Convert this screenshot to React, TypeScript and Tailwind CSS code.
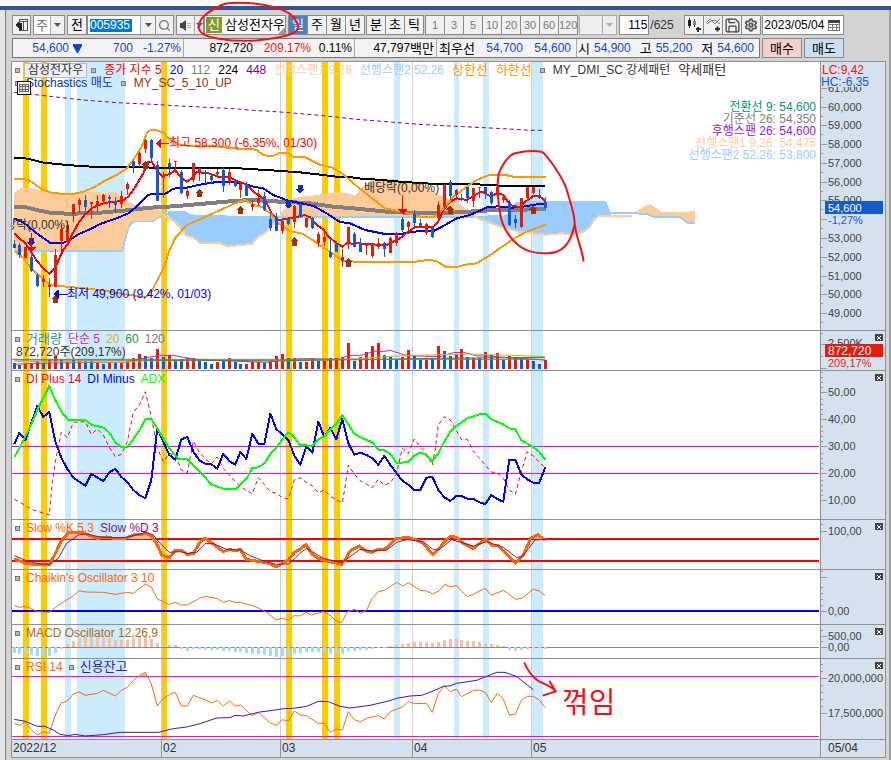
import { useState } from "react";
import type { ReactNode } from "react";
import { Search, Save, Settings } from "lucide-react";
import clsx from "clsx";

// Series are stored in thirds of a pixel; every plot scales them back down.
type Candle = [x: number, top: number, bottom: number, high: number, low: number, up: 0 | 1];
type Bar = [x: number, y: number, up: 0 | 1];
type Tick = { y: number; label?: string };

const UP = "#e81a0c";
const DOWN = "#125acd";
const ORANGE = "#ff6600";
const MAGENTA = "#ff00ff";

const YELLOW_BANDS = [[23, 6], [41, 6], [162, 5], [286, 6], [322, 6], [334, 6]];
const BLUE_BANDS = [[65, 6], [77, 48], [394, 6], [454, 5], [483, 6], [532, 11]];
const MONTH_LINES = [161, 280, 412, 531];

const candles: Candle[] = [
  [43, 463, 474, 449, 475, 0], [58, 465, 495, 458, 503, 0], [76, 471, 504, 471, 504, 1], [94, 501, 543, 490, 545, 0],
  [112, 555, 588, 550, 592, 0], [130, 568, 575, 555, 590, 1], [148, 586, 592, 565, 620, 1], [166, 495, 590, 477, 592, 1],
  [184, 418, 452, 405, 487, 1], [202, 405, 452, 392, 465, 1], [220, 343, 372, 342, 395, 1], [238, 330, 345, 325, 370, 1],
  [256, 330, 350, 315, 362, 0], [274, 336, 341, 336, 388, 1], [292, 333, 347, 315, 365, 1], [310, 316, 332, 313, 338, 1],
  [328, 320, 327, 315, 355, 0], [346, 332, 345, 322, 370, 0], [364, 318, 343, 303, 355, 1], [382, 282, 298, 277, 315, 1],
  [400, 214, 232, 212, 248, 0], [418, 188, 222, 186, 230, 1], [436, 151, 176, 148, 188, 1], [454, 150, 205, 147, 215, 0],
  [472, 226, 332, 212, 333, 0], [490, 258, 263, 245, 325, 1], [508, 220, 232, 208, 262, 0], [526, 213, 217, 213, 250, 1],
  [544, 247, 310, 240, 312, 0], [562, 303, 318, 290, 326, 1], [580, 220, 270, 218, 275, 1], [598, 234, 247, 234, 272, 1],
  [616, 247, 252, 240, 282, 0], [634, 258, 270, 252, 282, 0], [652, 245, 252, 237, 262, 1], [670, 240, 288, 232, 305, 0],
  [688, 245, 275, 238, 285, 1], [706, 272, 288, 272, 292, 0], [721, 283, 300, 280, 323, 1], [739, 282, 317, 277, 319, 0],
  [757, 343, 350, 330, 362, 1], [775, 325, 340, 300, 348, 1], [793, 317, 360, 305, 362, 0], [811, 387, 415, 360, 423, 0],
  [829, 380, 422, 370, 423, 0], [847, 393, 422, 388, 433, 1], [865, 387, 403, 380, 405, 0], [883, 348, 395, 345, 415, 1],
  [901, 341, 382, 335, 384, 0], [919, 385, 410, 383, 415, 1], [937, 383, 415, 381, 417, 0], [955, 433, 458, 425, 472, 1],
  [973, 440, 457, 425, 468, 1], [991, 485, 502, 450, 504, 0], [1009, 458, 485, 452, 486, 0], [1027, 502, 512, 478, 530, 1],
  [1045, 412, 462, 410, 478, 1], [1063, 433, 470, 427, 472, 0], [1081, 460, 485, 445, 487, 0], [1099, 463, 468, 463, 495, 1],
  [1117, 460, 497, 460, 503, 1], [1135, 458, 470, 445, 478, 1], [1153, 460, 478, 455, 502, 0], [1171, 445, 488, 440, 490, 1],
  [1189, 428, 458, 426, 467, 1], [1207, 388, 420, 380, 425, 0], [1225, 395, 412, 393, 425, 1], [1243, 372, 400, 360, 412, 0],
  [1261, 400, 408, 387, 413, 0], [1279, 402, 428, 400, 434, 1], [1297, 415, 440, 413, 445, 0], [1315, 345, 383, 332, 395, 1],
  [1333, 285, 350, 283, 360, 1], [1351, 277, 317, 270, 330, 0], [1369, 300, 314, 298, 320, 1], [1384, 325, 330, 312, 334, 0],
  [1402, 292, 325, 290, 340, 0], [1420, 295, 333, 293, 350, 1], [1438, 292, 295, 292, 325, 1], [1456, 292, 310, 290, 326, 0],
  [1474, 305, 340, 303, 345, 0], [1492, 292, 315, 290, 322, 1], [1510, 320, 330, 318, 340, 1], [1528, 337, 405, 330, 408, 0],
  [1546, 388, 400, 376, 415, 0], [1564, 325, 412, 323, 415, 1], [1582, 292, 325, 290, 330, 1], [1600, 292, 310, 290, 312, 1],
  [1618, 315, 320, 297, 328, 0], [1636, 335, 355, 322, 357, 0],
];

const volumes: Bar[] = [
  [43, 113, 0], [58, 120, 0], [76, 117, 1], [94, 115, 1], [112, 108, 1], [130, 113, 0], [148, 105, 1], [166, 93, 1],
  [184, 105, 0], [202, 112, 1], [220, 105, 0], [238, 107, 1], [256, 107, 0], [274, 107, 0], [292, 112, 1], [310, 117, 0],
  [328, 112, 1], [346, 113, 0], [364, 112, 1], [382, 108, 1], [400, 98, 1], [418, 87, 1], [436, 93, 0], [454, 98, 0],
  [472, 72, 1], [490, 95, 0], [508, 91, 1], [526, 104, 0], [544, 103, 0], [562, 100, 1], [580, 99, 1], [598, 108, 0],
  [616, 112, 0], [634, 117, 0], [652, 112, 1], [670, 107, 0], [688, 99, 1], [706, 111, 0], [721, 118, 0], [739, 117, 1],
  [757, 112, 1], [775, 112, 1], [793, 113, 0], [811, 110, 1], [829, 93, 1], [847, 87, 1], [865, 100, 0], [883, 98, 1],
  [901, 110, 0], [919, 110, 1], [937, 98, 1], [955, 107, 0], [973, 107, 1], [991, 98, 1], [1009, 100, 1], [1027, 96, 1],
  [1045, 54, 1], [1063, 107, 0], [1081, 96, 1], [1099, 81, 1], [1117, 63, 1], [1135, 54, 1], [1153, 90, 0], [1171, 95, 0],
  [1189, 103, 0], [1207, 96, 1], [1225, 75, 1], [1243, 93, 0], [1261, 105, 0], [1279, 105, 1], [1297, 100, 0], [1315, 63, 1],
  [1333, 78, 0], [1351, 93, 0], [1369, 88, 1], [1384, 72, 1], [1402, 95, 0], [1420, 99, 1], [1438, 99, 0], [1456, 81, 1],
  [1474, 90, 0], [1492, 84, 1], [1510, 105, 0], [1528, 93, 1], [1546, 98, 1], [1564, 103, 0], [1582, 103, 1], [1600, 108, 0],
  [1618, 117, 0], [1636, 105, 1],
];

const macd = [
  413, 417, 413, 419, 422, 422, 422, 413, 402, 387, 378, 370, 367, 367, 366, 368, 370, 375, 375, 375, 372, 367, 366, 371,
  384, 390, 390, 390, 402, 407, 402, 402, 405, 405, 405, 408, 408, 411, 411, 414, 416, 417, 420, 423, 426, 423, 423, 417,
  413, 411, 411, 411, 411, 417, 417, 417, 408, 407, 405, 405, 402, 396, 396, 393, 390, 387, 384, 381, 381, 381, 384, 381,
  375, 372, 372, 375, 378, 378, 381, 384, 387, 390, 393, 405, 408, 404, 402, 396, 396, 402,
];

const line = {
  ma448: "43,7 90,12 160,20 250,30 350,38 460,43 540,48 640,53 700,56 760,61 840,66 900,71 970,77 1070,88 1170,96 1270,104 1390,110 1510,116 1590,121 1627,121",
  ma224: "43,204 70,204 90,208 130,218 200,225 290,231 370,231 520,234 700,234 800,240 900,247 960,254 1010,260 1055,262 1090,267 1120,268 1200,275 1270,280 1350,283 1430,283 1520,288 1636,289",
  ma112: "43,350 75,351 110,360 160,370 220,371 300,368 380,361 450,353 520,349 600,342 700,333 760,330 840,335 900,338 930,340 1000,350 1070,356 1170,366 1270,370 1320,370 1390,366 1470,361 1550,360 1638,356",
  ma20: "43,386 70,397 110,430 150,458 185,460 210,450 235,433 270,418 300,402 350,385 385,370 415,345 445,315 455,312 495,312 520,296 560,293 600,284 650,276 700,276 730,280 760,290 790,295 820,315 865,332 895,338 915,342 945,350 980,370 1020,396 1050,400 1095,420 1150,431 1200,432 1250,424 1300,423 1330,408 1370,385 1410,375 1440,362 1460,352 1495,349 1535,353 1570,350 1610,343 1638,340",
  ma5: "43,430 60,447 75,458 90,480 110,512 130,535 148,551 165,535 180,500 190,480 205,460 215,435 235,400 255,373 280,352 310,340 340,335 365,334 385,320 400,300 415,275 430,250 445,215 455,215 467,235 485,258 510,252 526,240 545,265 560,275 575,265 590,246 625,250 660,262 690,262 715,275 740,283 760,305 780,318 795,330 815,370 835,390 865,386 885,382 915,375 930,382 950,405 970,418 985,440 1010,460 1028,470 1045,455 1055,462 1070,458 1085,462 1160,465 1180,455 1200,445 1225,425 1245,412 1300,412 1315,395 1330,360 1350,335 1370,325 1400,330 1420,318 1445,305 1470,318 1495,310 1510,315 1530,345 1560,352 1570,340 1600,318 1620,320 1638,335",
  upper: "43,267 75,268 95,275 125,298 160,310 220,312 250,305 280,293 310,275 350,255 380,235 400,210 425,170 440,130 452,120 470,121 490,128 510,150 540,165 600,170 640,168 690,174 770,179 790,196 820,198 835,190 865,190 880,200 915,202 935,212 960,224 995,232 1030,253 1070,288 1110,320 1155,355 1210,366 1270,382 1300,382 1325,362 1360,320 1400,290 1430,270 1470,254 1510,254 1550,262 1590,261 1638,261",
  lower: "43,483 70,503 90,530 110,550 150,585 220,592 300,600 360,610 435,622 455,605 475,565 495,525 505,490 525,445 560,405 600,388 640,370 700,342 735,330 760,345 790,352 815,375 835,400 870,423 910,432 945,455 970,472 1000,492 1030,512 1090,517 1240,516 1290,509 1310,514 1340,532 1370,532 1390,525 1430,520 1460,502 1500,475 1540,447 1580,425 1638,404",
  diMinus: "43,357 58,324 76,345 112,243 130,276 148,261 166,350 184,398 202,432 220,458 256,482 274,447 310,468 328,442 346,431 364,456 382,471 400,495 418,511 436,519 454,465 472,310 490,350 508,390 526,404 544,343 562,336 580,380 598,406 616,416 634,418 652,431 670,386 688,408 706,419 721,381 739,402 757,326 775,356 793,356 811,266 829,312 865,345 883,392 901,419 919,365 937,383 955,290 973,336 991,308 1009,343 1027,282 1045,355 1063,389 1081,383 1099,390 1117,400 1135,420 1153,392 1171,420 1207,467 1225,479 1243,495 1261,495 1279,458 1297,456 1315,495 1333,517 1351,528 1369,513 1384,513 1402,521 1420,522 1438,532 1456,537 1474,510 1492,522 1510,530 1528,404 1546,404 1564,449 1582,463 1600,473 1618,473 1636,426",
  adx: "43,397 58,370 94,298 112,255 148,183 166,225 184,260 205,285 256,285 276,300 310,308 328,323 346,352 364,366 382,366 400,343 418,316 436,283 454,282 472,310 490,340 508,370 535,402 562,403 600,440 635,479 670,491 710,491 740,460 757,429 775,427 795,414 811,387 829,368 847,343 865,323 880,333 901,361 937,362 955,343 973,335 991,313 1009,297 1027,270 1045,298 1063,326 1081,337 1117,352 1135,374 1153,376 1171,387 1189,413 1207,413 1225,410 1243,392 1261,383 1279,390 1297,408 1315,385 1333,350 1351,320 1369,303 1402,280 1438,268 1456,266 1474,283 1510,298 1528,310 1546,313 1564,345 1600,367 1618,380 1636,404",
  diPlus: "43,523 76,541 100,555 148,570 157,470 166,410 184,322 202,338 220,292 256,290 274,328 292,312 310,330 328,367 346,395 364,388 382,350 400,262 418,240 436,200 454,275 472,370 490,410 508,385 526,390 544,435 562,443 570,400 580,348 598,382 616,402 634,416 652,396 670,430 706,470 721,485 757,506 775,458 793,478 811,500 829,505 847,518 865,522 883,465 900,458 919,472 937,483 955,503 973,495 991,514 1027,534 1036,480 1045,420 1063,448 1081,467 1117,488 1135,463 1153,481 1171,473 1189,448 1207,370 1225,386 1243,342 1261,365 1279,385 1297,420 1306,370 1315,300 1333,275 1351,285 1384,343 1402,343 1420,378 1456,420 1474,441 1492,444 1510,460 1528,495 1546,508 1564,440 1582,380 1600,393 1636,430",
  slowK: "43,131 76,145 110,149 148,150 166,115 184,78 205,53 245,52 270,62 292,70 320,66 345,71 375,70 400,60 440,56 455,63 472,90 485,120 508,128 526,106 545,106 562,118 580,116 598,85 615,69 635,84 670,110 690,103 706,108 721,103 739,133 760,137 800,143 829,155 865,135 883,112 900,103 918,88 935,117 955,130 980,138 1025,148 1035,135 1050,108 1078,93 1095,107 1115,112 1135,103 1153,104 1170,88 1190,70 1225,68 1250,75 1270,86 1298,118 1320,98 1335,78 1350,64 1370,67 1390,85 1420,100 1456,72 1474,90 1495,93 1520,118 1547,144 1570,120 1592,70 1613,59 1636,75",
  slowD: "43,122 76,136 110,145 148,148 175,130 200,85 235,60 260,57 300,66 345,68 380,67 440,52 460,60 480,85 508,112 540,110 562,115 590,112 615,86 640,86 680,103 720,104 750,122 790,138 830,148 865,147 885,130 900,115 920,100 940,112 970,130 1025,143 1050,125 1080,103 1115,108 1160,105 1190,82 1220,74 1270,80 1300,104 1320,102 1355,74 1420,93 1460,80 1510,97 1550,128 1570,122 1605,75 1638,73",
  chaikin: "43,272 58,277 76,274 94,281 112,290 148,292 166,277 200,255 220,243 238,227 256,231 310,232 346,238 382,232 400,235 436,207 454,216 472,252 508,269 526,262 544,270 562,270 598,250 616,244 652,251 670,262 688,257 706,262 721,262 757,272 775,279 800,292 829,315 847,310 865,315 883,302 900,303 918,292 935,300 970,290 990,300 1008,318 1025,323 1042,290 1065,283 1082,295 1100,285 1117,250 1135,230 1153,226 1190,202 1208,213 1225,203 1260,226 1280,228 1298,237 1317,228 1334,208 1352,216 1370,211 1385,230 1403,245 1420,238 1438,228 1456,220 1474,241 1510,226 1530,240 1547,253 1565,250 1600,223 1618,228 1636,242",
  rsi: "43,625 58,631 76,620 94,645 112,660 130,650 148,655 166,600 184,564 202,558 220,537 238,531 256,541 292,535 310,526 346,543 364,526 382,517 400,496 418,482 436,472 454,507 472,573 490,550 508,539 526,532 544,573 562,573 580,541 616,555 634,564 652,556 670,573 688,558 706,573 721,570 757,602 775,592 811,624 829,631 847,614 865,618 883,588 901,600 919,602 955,625 973,625 991,652 1009,642 1027,645 1045,590 1063,614 1081,620 1099,610 1135,602 1153,612 1171,590 1207,576 1225,560 1243,566 1279,565 1297,592 1315,535 1333,512 1351,530 1369,523 1384,545 1420,527 1438,525 1456,532 1474,562 1492,535 1510,552 1528,600 1546,597 1564,556 1582,544 1600,544 1618,555 1636,578",
  credit: "43,613 76,619 112,634 135,634 160,645 180,658 205,662 225,658 256,663 310,659 360,652 475,652 520,641 560,636 600,626 650,609 690,608 705,601 730,603 780,591 820,586 850,581 880,580 920,574 955,559 985,560 1020,574 1050,579 1110,571 1170,557 1190,550 1230,543 1265,541 1300,528 1330,514 1350,513 1370,505 1430,496 1460,484 1490,472 1515,472 1550,485 1600,524",
  vol5: "43,118 100,115 300,112 380,112 410,103 440,98 480,91 520,91 550,97 590,103 640,106 800,112 860,104 910,101 1020,103 1045,91 1085,91 1120,79 1155,79 1170,76 1215,90 1250,93 1320,95 1360,83 1390,82 1430,93 1470,93 1520,98 1610,103 1635,106",
  vol20: "43,110 150,110 370,112 430,108 800,106 900,108 1070,101 1170,94 1350,88 1400,87 1570,92 1635,95",
  vol60: "43,105 130,105 600,106 830,108 900,106 1100,104 1300,100 1635,97",
};

const Line = ({ points, color, width = 3, dash }: { points: string; color: string; width?: number; dash?: string }) => (
  <polyline points={points} fill="none" stroke={color} strokeWidth={width} strokeDasharray={dash} strokeLinejoin="round" />
);

const Level = ({ y, color, width = 1 }: { y: number; color: string; width?: number }) => (
  <rect x="0" y={y} width="99.9%" height={width} fill={color} />
);

// Bar arrows: 26 units wide, tip at (x, y)
const UpArrow = ({ x, y }: { x: number; y: number }) => (
  <path d={`M${x} ${y}l13 12h-6v13h-14v-13h-6z`} fill="#993300" />
);
const DownArrow = ({ x, y }: { x: number; y: number }) => (
  <path d={`M${x} ${y}l13 -12h-6v-13h-14v13h-6z`} fill="#0a2fb0" />
);

const Square = () => <span className="h-[5px] w-[5px] shrink-0 border border-[#777] bg-[#bbb]" />;

const Axis = ({ top, ticks, minor = [], children }: { top: number; ticks: Tick[]; minor?: number[]; children?: ReactNode }) => (
  <svg className="block h-full w-full" aria-hidden="true">
    <g transform={`translate(0 ${-top})`} fontSize="11">
      {minor.map(y => <rect key={y} x="0" y={Math.round(y)} width="2" height="1" fill="#999" />)}
      {ticks.map(t => (
        <g key={t.y}>
          <rect x="0" y={Math.round(t.y)} width="6" height="1" fill="#999" />
          {t.label && <text x="7" y={Math.round(t.y) + 4} fill="#444">{t.label}</text>}
        </g>
      ))}
      {children}
    </g>
  </svg>
);

type PanelProps = {
  name: string;
  height: string;
  shift: number; // offset of the series origin inside the panel
  series: ReactNode;
  levels?: ReactNode;
  notes?: ReactNode;
  axis: ReactNode;
  closable?: boolean;
  children?: ReactNode;
};

const Panel = ({ name, height, shift, series, levels, notes, axis, closable = true, children }: PanelProps) => {
  return (
    <section aria-label={name} className={clsx("flex border-b border-[#909090]", height)}>
      <div className="relative min-w-0 flex-1 overflow-hidden bg-white">
        <svg className="block h-full w-full" shapeRendering="crispEdges" aria-hidden="true">
          <g transform="translate(-12 0)">
            {MONTH_LINES.map(x => <rect key={x} x={x} y="0" width="1" height="100%" fill="#d0d0d0" />)}
            {BLUE_BANDS.map(([x, w]) => <rect key={x} x={x} y="0" width={w} height="100%" fill="#cbecff" />)}
            {YELLOW_BANDS.map(([x, w]) => <rect key={x} x={x} y="0" width={w} height="100%" fill="#ffcc00" />)}
          </g>
          {levels}
          <g transform={`translate(-12 ${shift}) scale(0.33333)`}>{series}</g>
          {notes}
        </svg>
        {children}
      </div>
      <div className="relative w-[65px] shrink-0 overflow-hidden border-l border-[#909090] bg-[#d6e1ef]">
        {axis}
        {closable && (
          <button type="button" aria-label={`${name} 닫기`} className="absolute right-[2px] top-[3px] flex h-[7px] w-2 items-center justify-center bg-[#444]">
            <svg width="4" height="4" viewBox="0 0 4 4"><path d="M0 0L4 4M4 0L0 4" stroke="#fff" strokeWidth="1" /></svg>
          </button>
        )}
      </div>
    </section>
  );
};

const Legend = ({ children }: { children: ReactNode }) => (
  <div className="absolute left-[3px] top-0.5 flex h-3 items-center gap-[6px] whitespace-nowrap leading-3">{children}</div>
);

const Triangle = ({ className = "text-[#555]" }: { className?: string }) => (
  <svg width="7" height="4" viewBox="0 0 7 4" className={className}><path d="M0 0H7L3.5 4Z" fill="currentColor" /></svg>
);

const toolBtn = "flex h-5 shrink-0 items-center justify-center border border-[#8a8a8a] bg-[#f1f1f1]";
const btnGroup = "flex h-5 shrink-0 gap-px border border-[#8a8a8a] bg-[#8a8a8a]";

const Toolbar = () => {
  const [period, setPeriod] = useState("일");
  const [code, setCode] = useState("005935");
  const [count, setCount] = useState("115");
  const [date, setDate] = useState("2023/05/04");

  const periodButton = (p: string, muted = false) => (
    <button
      key={p}
      type="button"
      onClick={() => setPeriod(p)}
      className={clsx(
        "flex h-[18px] min-w-[18px] items-center justify-center",
        period === p ? "bg-[#4a80c4] text-white" : muted ? "bg-[#f1f1f1] text-[#777]" : "bg-[#f1f1f1] text-black",
      )}
    >
      {p}
    </button>
  );

  return (
    <div className="flex h-5 items-center whitespace-nowrap pl-px text-[13px]">
      <button type="button" aria-label="패널 접기" className={clsx(toolBtn, "mr-0.5 w-[19px]")}>
        <svg width="13" height="12" viewBox="0 0 13 12" shapeRendering="crispEdges">
          <path d="M4.5 .5H12.5V11.5H4.5ZM5 2.5H12M8.5 3V11" fill="none" stroke="#555" />
          <path d="M0 6L4 3V9Z" fill="#222" /><path d="M4 4H7V11H4Z" fill="#222" />
        </svg>
      </button>
      <div className="relative mr-0.5 h-5 w-8 shrink-0 border border-[#8a8a8a] bg-white">
        <select aria-label="종류" className="h-full w-full appearance-none bg-transparent pl-0.5 text-[#666]"><option>주</option></select>
        <span className="pointer-events-none absolute inset-y-0 right-0 flex w-[14px] items-center justify-center border-l border-[#aaa] bg-[#f1f1f1]"><Triangle /></span>
      </div>
      <button type="button" className={clsx(toolBtn, "w-5")}>전</button>
      <div className="flex h-5 w-[87px] shrink-0 items-center border border-[#8a8a8a] bg-white">
        <input aria-label="종목코드" value={code} onChange={e => setCode(e.target.value)} className="ml-0.5 h-[13px] w-[42px] bg-[#0078d7] text-[12px] leading-3 text-white outline-none" />
        <button type="button" aria-label="종목 목록" className="ml-auto flex h-full w-[15px] items-center justify-center border-l border-[#aaa] bg-[#f1f1f1]"><Triangle /></button>
        <button type="button" aria-label="종목 검색" className="flex h-full w-[18px] items-center justify-center border-l border-[#8a8a8a] bg-[#f1f1f1]"><Search size={13} color="#777" strokeWidth={2.5} /></button>
      </div>
      <div className="ml-0.5 flex h-5 w-7 shrink-0 border border-[#8a8a8a] bg-[#f1f1f1]">
        <button type="button" aria-label="소리" className="flex w-[17px] items-center justify-center">
          <svg width="13" height="11" viewBox="0 0 13 11"><path d="M1 3H3L7 0V11L3 8H1Z" fill="#444" /><path d="M9 3V8M11 3V8" stroke="#777" strokeDasharray="1 1" /></svg>
        </button>
        <button type="button" aria-label="소리 설정" className="flex flex-1 items-center justify-center border-l border-[#aaa]"><Triangle /></button>
      </div>
      <div className="relative flex h-5 w-[82px] shrink-0 items-center border border-[#8a8a8a] bg-white">
        <span className="ml-px flex h-4 w-4 items-center justify-center bg-[#829a2a] text-white">신</span>
        <span className="ml-[3px]">삼성전자우</span>
        <svg className="absolute bottom-0 right-0" width="7" height="7"><path d="M7 0V7H0Z" fill="#999" /></svg>
      </div>
      <div className={clsx(btnGroup, "ml-0.5")}>{["일", "주", "월", "년"].map(p => periodButton(p))}</div>
      <div className={clsx(btnGroup, "ml-px")}>{["분", "초", "틱"].map(p => periodButton(p))}</div>
      <div className={clsx(btnGroup, "ml-px text-[11px]")}>
        {["1", "3", "5", "10", "20", "30", "60", "120"].map(p => periodButton(p, true))}
      </div>
      <div className="relative ml-px h-5 w-[38px] shrink-0 border border-[#aaa] bg-[#eee]">
        <select aria-label="주기" disabled className="h-full w-full appearance-none bg-transparent"><option></option></select>
        <span className="pointer-events-none absolute inset-y-0 right-0 flex w-[14px] items-center justify-center border-l border-[#aaa]"><Triangle className="text-[#aaa]" /></span>
      </div>
      <label className="ml-0.5 flex items-center text-[12px] text-[#333]">
        <input aria-label="봉 개수" value={count} onChange={e => setCount(e.target.value)} className="mr-px h-5 w-[30px] border border-[#8a8a8a] bg-white pr-px text-right text-black outline-none" />
        <span className="w-[34px]">/625</span>
      </label>
      <button type="button" aria-label="차트 추가" className={clsx(toolBtn, "w-5")}>
        <svg width="15" height="14" viewBox="0 0 15 14" shapeRendering="crispEdges"><path d="M2.5 0V10M7.5 1V9" stroke="#333" /><path d="M1 2H4V8H1Z" fill="#222" /><path d="M6 3H9V7H6Z" fill="#888" /><path d="M9 11H14M11 9V14" stroke="#333" strokeWidth="2" /></svg>
      </button>
      <button type="button" aria-label="지표 추가" className={clsx(toolBtn, "-ml-px w-5")}>
        <svg width="15" height="14" viewBox="0 0 15 14"><path d="M0 5L4 1L9 6L14 1M1 6L5 3L9 2L14 6" fill="none" stroke="#777" /><path d="M9 11H14M11.5 8.5V13.5" stroke="#333" strokeWidth="2" /></svg>
      </button>
      <button type="button" aria-label="저장" className={clsx(toolBtn, "-ml-px w-5")}><Save size={17} color="#444" strokeWidth={1.8} /></button>
      <button type="button" aria-label="설정" className={clsx(toolBtn, "-ml-px w-5")}><Settings size={14} color="#555" strokeWidth={3} /></button>
      <div className="ml-px flex h-5 w-[82px] shrink-0 items-center justify-between border border-[#8a8a8a] bg-white pr-[3px]">
        <input aria-label="일자" value={date} onChange={e => setDate(e.target.value)} className="h-full w-[64px] bg-transparent pl-px text-[12px] outline-none" />
        <button type="button" aria-label="달력">
          <svg width="12" height="11" viewBox="0 0 12 11" shapeRendering="crispEdges"><path d="M.5 1.5H11.5V10.5H.5ZM1 4.5H11M4.5 4V10M8.5 4V10M1 7.5H11" fill="none" stroke="#777" /><path d="M0 0H12V3H0Z" fill="#444" /></svg>
        </button>
      </div>
    </div>
  );
};

const QuoteBar = () => (
  <div className="flex h-5 whitespace-nowrap pl-px leading-none">
    <div className="flex w-[748px] shrink-0 items-stretch border border-[#777] bg-[#f3f3f3] *:flex *:items-center">
      <div className="w-[171px] justify-end border-r border-[#aaa] pr-0.5 text-[#1446c8]">
        <span className="flex items-center gap-1">54,600 <svg width="9" height="9" viewBox="0 0 9 9"><path d="M0 0H9V2L5 9H4L0 2Z" fill="currentColor" /></svg></span>
        <span className="w-[51px] text-right">700</span>
        <span className="w-12 text-right">-1.27%</span>
      </div>
      <div className="w-[171px] justify-end border-r border-[#aaa] pr-0.5">
        <span>872,720</span>
        <span className="w-[58px] text-right text-[#e81a0c]">209.17%</span>
        <span className="w-[41px] text-right">0.11%</span>
      </div>
      <div className="w-[82px] justify-end border-r border-[#aaa] pr-0.5">47,797<span className="text-[13px]">백만</span></div>
      <div className="w-[140px] justify-between border-r border-[#aaa] pl-0.5 pr-[5px]">
        <span className="text-[13px]">최우선</span>
        <span className="text-[#1446c8]">54,700</span>
        <span className="text-[#1446c8]">54,600</span>
      </div>
      <div className="flex-1 justify-between pl-px pr-[5px]">
        {[["시", "54,900"], ["고", "55,200"], ["저", "54,600"]].map(([k, v]) => (
          <span key={k} className="flex items-center gap-1"><span className="text-[13px]">{k}</span><span className="text-[#1446c8]">{v}</span></span>
        ))}
      </div>
    </div>
    <button type="button" className="ml-0.5 w-10 border border-[#8a8a8a] bg-[#f5d0cb] text-[13px]">매수</button>
    <button type="button" className="ml-0.5 w-10 border border-[#8a8a8a] bg-[#c9dff4] text-[13px]">매도</button>
  </div>
);

const PricePanel = () => {
  const majors = [87.6, 106.9, 125, 144, 163, 181.7, 200.4, 219, 238, 257, 276, 294, 313];
  const labels = ["61,000", "60,000", "59,000", "58,000", "57,000", "56,000", "55,000", "", "53,000", "52,000", "51,000", "50,000", "49,000"];
  return (
    <Panel
      name="가격"
      height="h-[269px]"
      shift={28}
      closable={false}
      series={
        <>
          <path d="M43 308L61 295L88 293L130 304L160 308L200 310L240 308L280 304L320 310L335 305L350 306L365 320L385 335L405 345L450 350L485 362L490 375L455 395L400 397L390 405L382 425L366 483H43Z" fill="#ffcc99" />
          <path d="M495 368L555 365L570 375L600 378H833L825 395L810 410L795 430L775 440L755 462L710 466L685 470L660 460L600 458L580 442L560 438L535 405L520 392Z" fill="#99ccff" />
          <path d="M833 383L850 360L865 345L880 325L900 320L930 318L970 312L1020 307L1040 309L1065 318L1080 300L1095 285L1120 268H1190L1220 276L1265 278L1300 305L1330 320L1370 335L1400 360L1420 378Z" fill="#ffcc99" />
          <path d="M1420 378H1510L1525 370L1535 350L1550 335L1595 333H1818L1833 368V376H1795L1780 392L1770 410L1750 425L1730 432L1680 430L1640 434L1610 432L1560 425L1510 413L1480 402L1440 388Z" fill="#99ccff" />
          <path d="M1900 370L1930 350L1940 345L1955 346L1970 355L1985 366H2062L2085 360V399H2062L2040 381H1960L1940 372Z" fill="#ffcc99" />
          <Line points="43,483 366,483 382,425 390,405 400,395 455,395 490,376 500,365 555,365 570,375 600,378 835,381 1420,381 1510,377" color="#99ccff" width={5} />
          <Line points="490,376 520,392 535,405 560,438 580,442 600,458 660,460 685,470 710,466 755,462 775,440 795,430 810,410 825,395 835,383" color="#ffcc99" width={6} />
          <Line points="1400,360 1420,375 1440,388 1480,402 1510,413 1560,425 1610,432 1640,434 1680,430 1730,432 1750,425 1770,410 1780,392 1795,379 1895,378" color="#ffcc99" width={6} />
          <Line points="1818,368 1890,369 1940,372 1960,380 2040,381 2062,398 2085,399" color="#99ccff" width={6} />
          <Line points={line.ma448} color="#800080" dash="12 9" />
          <Line points={line.ma224} color="#000" width={6} />
          <Line points={line.ma112} color="#808080" width={12} />
          <Line points={line.ma20} color="#0000f0" width={6} />
          <Line points={line.ma5} color="#ff0000" width={6} />
          <Line points={line.upper} color="#ff9900" width={6} />
          <Line points={line.lower} color="#ff9900" width={6} />
          {candles.map(([x, top, bottom, high, low, up]) => (
            <g key={x} fill={up ? UP : DOWN}>
              <rect x={x - 1} y={high} width="3" height={low - high} />
              <rect x={x - 4} y={top} width="9" height={bottom - top} />
            </g>
          ))}
          {[[436, 213], [598, 297], [721, 348], [166, 615], [883, 442], [1045, 505], [1351, 347], [1600, 347]].map(([x, y]) => <UpArrow key={x} x={x} y={y} />)}
          {[[94, 469], [865, 356], [901, 310]].map(([x, y]) => <DownArrow key={x} x={x} y={y} />)}
          <path d="M93 430h3v40h14l-15 16l-15 -16h13zM1206 315h3v43h14l-15 16l-15 -16h13z" fill="#ff0000" />
          <path d="M467 160l16 -15v14h24v3h-24v14z" fill="#ff0000" />
          <path d="M159 612l18 -14v13h26v3h-26v12z" fill="#0000f0" />
          <path
            d="M1624 185C1600 181 1570 184 1545 190C1525 196 1505 225 1496 252C1490 290 1494 340 1503 385C1512 420 1530 445 1558 468C1580 485 1605 491 1640 490C1685 490 1712 465 1724 402C1725 370 1708 330 1698 292C1686 262 1655 215 1632 190L1624 185M1724 402C1730 450 1745 470 1751 515"
            fill="none" stroke="#fa0f14" strokeWidth="6" shapeRendering="auto"
          />
        </>
      }
      notes={
        <g transform="translate(-12 -62)">
          <text x="169" y="147" fill="#f00">최고 58,300 (-6,35%, 01/30)</text>
          <text x="67" y="298" fill="#00e">최저 49,900 (9,42%, 01/03)</text>
          <text x="364" y="192" fill="#333">배당락(0,00%)</text>
          <text x="69" y="229" textAnchor="end" fill="#333">배당락(0,00%)</text>
        </g>
      }
      axis={
        <Axis top={62} ticks={majors.map((y, i) => ({ y, label: labels[i] }))} minor={majors.map(y => y + 9)}>
          <rect x="1" y="62" width="64" height="25" fill="#d6e1ef" />
          <text x="1" y="74" fill="#e81a0c" fontSize="12">LC:9,42</text>
          <text x="0" y="86" fill="#125acd" fontSize="12">HC:-6,35</text>
          <rect x="4" y="201" width="58" height="13" fill="#125acd" />
          <text x="7" y="212" fill="#fff">54,600</text>
          <text x="7" y="224" fill="#125acd">-1,27%</text>
        </Axis>
      }
    >
      <div className="absolute left-[3px] top-0.5 flex h-3 items-center gap-2 whitespace-nowrap leading-3">
        <Square />
        <button type="button" className="-mx-1 h-[15px] border border-[#bbb] bg-[#eee] px-[3px] leading-[13px] text-[#333]">삼성전자우</button>
        <Square />
        <span className="text-[#f00]">종가 지수 5</span>
        <span className="text-[#00e]">20</span>
        <span className="text-[#808080]">112</span>
        <span>224</span>
        <span className="text-[#800080]">448</span>
        <span className="text-[#ffcc99]">선행스팬1 9,26</span>
        <span className="text-[#99ccff]">선행스팬2 52,26</span>
        <span className="text-[13px] text-[#ff9900]">상한선</span>
        <span className="text-[13px] text-[#ff9900]">하한선</span>
        <Square />
        <span className="text-[#333]">MY_DMI_SC 강세패턴</span>
        <span className="text-[13px] text-[#333]">약세패턴</span>
      </div>
      <div className="absolute left-[3px] top-[15px] flex h-3 items-center gap-2 whitespace-nowrap leading-3">
        <Square />
        <span className="-ml-0.5 text-[#0a2fb0]">Stochastics 매도</span>
        <Square />
        <span className="text-[#993300]">MY_SC_5_10_UP</span>
      </div>
      <button type="button" aria-label="데이터 표" className="absolute left-[5px] top-[19px] flex h-[14px] w-[14px] items-center justify-center border border-black bg-[#eee]">
        <svg width="10" height="8" viewBox="0 0 10 8" shapeRendering="crispEdges"><path d="M.5 .5H9.5V7.5H.5ZM0 2.5H10M0 5.5H10M3.5 0V8M6.5 0V8" fill="none" stroke="#666" /></svg>
      </button>
      <div className="absolute right-1 top-[39px] flex flex-col text-right leading-3">
        <span className="text-[#009678]">전환선 9: 54,600</span>
        <span className="text-[#808080]">기준선 26: 54,350</span>
        <span className="text-[#9b14dc]">후행스팬 26: 54,600</span>
        <span className="text-[#ffcc99]">선행스팬1 9,26: 54,475</span>
        <span className="text-[#99ccff]">선행스팬2 52,26: 53,800</span>
      </div>
    </Panel>
  );
};

export default function App() {
  return (
    <div className="relative flex min-h-screen flex-col bg-[#d3d3d3] font-['Liberation_Sans','Noto_Sans_CJK_KR',sans-serif] text-[12px] text-black">
      <div className="h-[6px] bg-white" />
      <div className="h-1 bg-[#34558f]" />
      <div className="flex flex-1">
        <div className="w-[6px] shrink-0 border-r border-[#7d7d7d] bg-[#e6e6e6]" />
        <main className="flex min-w-0 flex-1 flex-col gap-[3px] pl-[5px] pr-[3px] pt-[5px]">
          <Toolbar />
          <QuoteBar />
          <div className="flex flex-col border border-[#909090]">
            <PricePanel />

            <Panel
              name="거래량"
              height="h-10"
              shift={-6}
              series={
                <>
                  {volumes.map(([x, y, up]) => <rect key={x} x={x - 4} y={y} width="9" height={132 - y} fill={up ? UP : DOWN} />)}
                  <Line points={line.vol5} color="#d21eb4" />
                  <Line points={line.vol20} color="#e6aa14" />
                  <Line points={line.vol60} color="#149632" />
                  <Line points="36,103 1635,103" color="#777" />
                </>
              }
              axis={
                <Axis top={331} ticks={[{ y: 344 }, { y: 368 }]} minor={[333, 356]}>
                  <text x="7" y="347" fill="#444">2,500K</text>
                  <rect x="4" y="344" width="58" height="13" fill="#e81a0c" />
                  <text x="7" y="355" fill="#fff" fontSize="12">872,720</text>
                  <text x="7" y="367" fill="#e81a0c">209,17%</text>
                </Axis>
              }
            >
              <Legend>
                <Square />
                <span className="text-[13px] text-[#289696]">거래량</span>
                <span className="text-[#d21eb4]">단순 5</span>
                <span className="text-[#e6aa14]">20</span>
                <span className="text-[#149632]">60</span>
                <span className="text-[#777]">120</span>
              </Legend>
              <p className="absolute left-1 top-[15px] leading-3 text-[#333]">872,720주(209,17%)</p>
            </Panel>

            <Panel
              name="DMI"
              height="h-[149px]"
              shift={-46}
              levels={<><Level y={75} color={MAGENTA} /><Level y={102} color={MAGENTA} /></>}
              series={
                <>
                  <Line points={line.diPlus} color="#ff0000" dash="12 9" />
                  <Line points={line.diMinus} color="#0000f0" width={6} />
                  <Line points={line.adx} color="#00ff00" width={6} />
                </>
              }
              axis={
                <Axis
                  top={371}
                  ticks={[392, 419, 446, 473, 500].map((y, i) => ({ y, label: `${50 - i * 10},00` }))}
                  minor={[372, 377, 382, 387, 399, 404, 409, 414, 426, 431, 436, 441, 453, 458, 463, 468, 480, 485, 490, 495]}
                />
              }
            >
              <Legend>
                <Square />
                <span className="text-[#f00]">DI Plus 14</span>
                <span className="text-[#00e]">DI Minus</span>
                <span className="text-[#0f0]">ADX</span>
              </Legend>
            </Panel>

            <Panel
              name="Slow"
              height="h-[50px]"
              shift={-5}
              levels={<><Level y={18} color="#f00" width={2} /><Level y={40} color="#f00" width={2} /></>}
              series={
                <>
                  <path d="M188 72L205 53H245L292 70V72ZM385 72L400 60L440 56L460 70V72ZM1592 72L1613 59L1634 72Z" fill="#f7bfa5" />
                  <Line points={line.slowK} color={ORANGE} width={9} />
                  <Line points={line.slowD} color="#7d1478" />
                </>
              }
              axis={<Axis top={520} ticks={[{ y: 531, label: "100,00" }]} minor={[524]} />}
            >
              <Legend>
                <Square />
                <span className="text-[#f60]">Slow %K 5,3</span>
                <span className="text-[#7d1478]">Slow %D 3</span>
              </Legend>
            </Panel>

            <Panel
              name="Chaikin's Oscillator"
              height="h-[55px]"
              shift={-55}
              levels={<Level y={40} color="#00f" width={2} />}
              series={<Line points={line.chaikin} color={ORANGE} />}
              axis={<Axis top={570} ticks={[{ y: 577 }, { y: 611, label: "0,00" }]} minor={[571, 587, 593, 599, 605]} />}
            >
              <Legend><Square /><span className="text-[#f60]">Chaikin's Oscillator 3 10</span></Legend>
            </Panel>

            <Panel
              name="MACD Oscillator"
              height="h-[34px]"
              shift={-110}
              levels={<Level y={22} color="#888" />}
              series={macd.map((y, i) => {
                const x = candles[i][0];
                return <rect key={x} x={x - 4} y={Math.min(y, 397)} width="9" height={Math.max(Math.abs(y - 397), 2)} fill={y < 397 ? "#fabea0" : "#a0dcf5"} />;
              })}
              axis={<Axis top={625} ticks={[{ y: 636, label: "500,00" }, { y: 647, label: "0,00" }]} minor={[630, 641]} />}
            >
              <Legend><Square /><span className="text-[#b46414]">MACD Oscillator 12,26,9</span></Legend>
            </Panel>

            <Panel
              name="RSI"
              height="h-[81px]"
              shift={-144}
              levels={<><Level y={17} color={MAGENTA} /><Level y={77} color={MAGENTA} /></>}
              series={
                <>
                  <path d="M418 484L436 472L442 484Z" fill="#f7bfa5" />
                  <Line points={line.rsi} color={ORANGE} />
                  <Line points={line.credit} color="#3c14b4" />
                  <path d="M1572 442C1585 470 1600 488 1615 498C1630 507 1650 510 1667 528M1648 497L1667 529L1628 542" fill="none" stroke="#fa0f14" strokeWidth="6" shapeRendering="auto" />
                </>
              }
              notes={<text x="550" y="54" fontSize="29" fill="#fa0f14">꺾임</text>}
              axis={
                <Axis
                  top={659}
                  ticks={[{ y: 678, label: "20,000,000" }, { y: 713, label: "17,500,000" }]}
                  minor={[664, 671, 685, 692, 699, 706]}
                />
              }
            >
              <Legend>
                <Square />
                <span className="text-[#f60]">RSI 14</span>
                <Square />
                <span className="text-[13px] text-[#3c14b4]">신용잔고</span>
              </Legend>
            </Panel>

            <div className="flex h-[17px] bg-[#d6e1ef] leading-4 text-[#333] *:pl-px">
              <span className="w-[149px]">2022/12</span>
              <span className="w-[119px] border-l border-[#909090]">02</span>
              <span className="w-[132px] border-l border-[#909090]">03</span>
              <span className="w-[119px] border-l border-[#909090]">04</span>
              <span className="flex-1 border-l border-[#909090]">05</span>
              <span className="w-[65px] border-l border-[#909090]"><span className="pl-[6px]">05/04</span></span>
            </div>
          </div>
        </main>
        <div className="w-0.5 shrink-0 bg-[#a0a0a0]" />
      </div>
      {/* hand-drawn ring round the stock name */}
      <svg className="pointer-events-none absolute left-[195px] top-0" width="108" height="44" viewBox="585 0 324 132" aria-hidden="true">
        <path d="M597 85C592 55 625 35 665 15C690 4 725 8 755 10C800 14 840 24 868 40C888 55 898 78 893 88C880 105 850 110 800 118C760 124 700 123 655 116C620 110 600 104 594 78" fill="none" stroke="#fa0f14" strokeWidth="6" />
      </svg>
    </div>
  );
}
